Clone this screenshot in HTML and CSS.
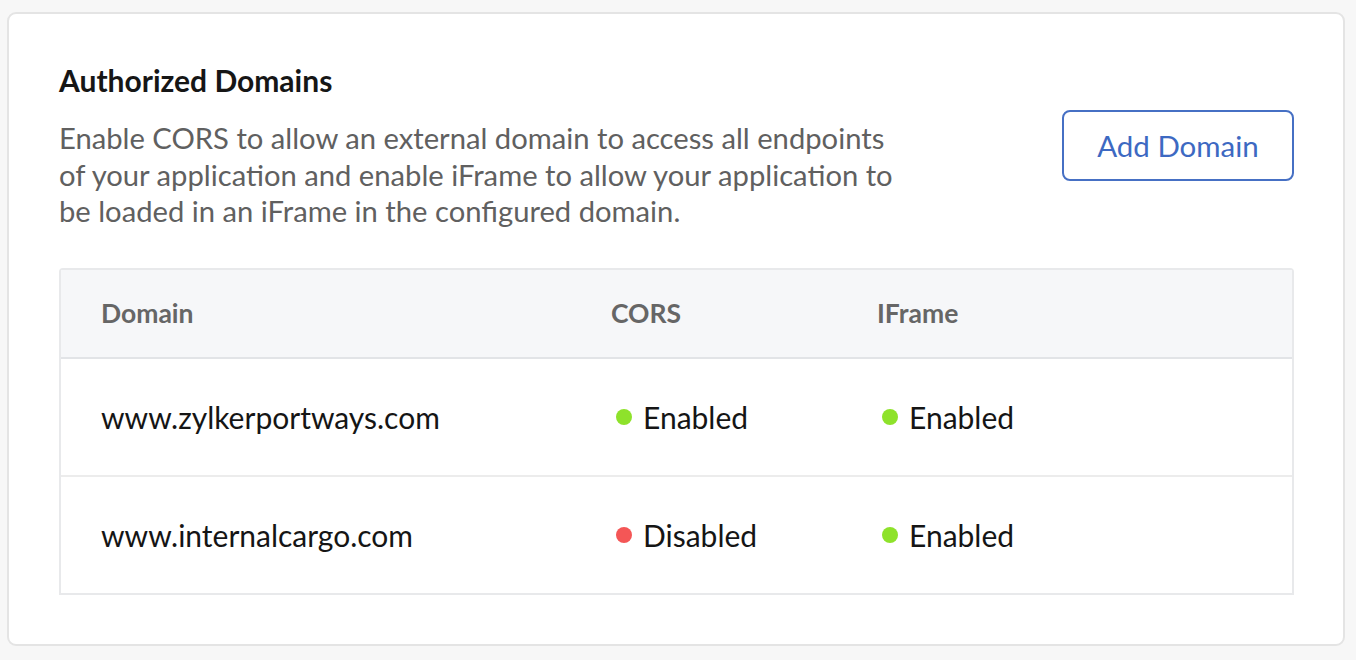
FILE: index.html
```html
<!DOCTYPE html>
<html lang="en">

<head>
    <meta charset="UTF-8">
    <title>Authorized Domains</title>
    <link rel="stylesheet" href="styles.css">
</head>

<body>

    <div class="card">
        <div class="card__head">
            <div class="card__intro">
                <h2 class="card__title">Authorized Domains</h2>
                <p class="card__desc">Enable CORS to allow an external domain to access all endpoints of your application and enable iFrame to allow your application to be loaded in an iFrame in the configured domain.</p>
            </div>
            <button class="btn">Add Domain</button>
        </div>

        <div class="domains">
            <div class="domains__row domains__row--head">
                <div class="domains__cell">Domain</div>
                <div class="domains__cell">CORS</div>
                <div class="domains__cell">IFrame</div>
            </div>
            <div class="domains__row">
                <div class="domains__cell">www.zylkerportways.com</div>
                <div class="domains__cell"><span class="status status--on"></span>Enabled</div>
                <div class="domains__cell"><span class="status status--on"></span>Enabled</div>
            </div>
            <div class="domains__row">
                <div class="domains__cell">www.internalcargo.com</div>
                <div class="domains__cell"><span class="status status--off"></span>Disabled</div>
                <div class="domains__cell"><span class="status status--on"></span>Enabled</div>
            </div>
        </div>
    </div>

</body>

</html>
```
FILE: styles.css
```css
* {
    padding: 0;
    margin: 0;
    box-sizing: border-box;
}

body {
    background-color: #f7f7f7;
    font-family: Lato, "Open Sans", sans-serif;
    padding: 12px 11px 14px 7px;
}

.card {
    background-color: #fff;
    border: 2px solid #e4e4e4;
    border-radius: 9px;
    padding: 48px 49px 50px 50px;
    height: 634px;
}

.card__head {
    display: flex;
    justify-content: space-between;
    align-items: flex-start;
}

.card__title {
    font-size: 30px;
    font-weight: 700;
    line-height: 36px;
    color: #161616;
}

.card__desc {
    margin-top: 22px;
    max-width: 856px;
    font-size: 29.2px;
    line-height: 36.5px;
    color: #606060;
}

.btn {
    margin-top: 48px;
    width: 232px;
    height: 71px;
    background: #fff;
    border: 2px solid #4670c4;
    border-radius: 8px;
    color: #3d69c2;
    font-family: inherit;
    font-size: 29.5px;
}

.domains {
    margin-top: 38px;
    border: 2px solid #e8e9eb;
    border-radius: 4px 4px 0 0;
}

.domains__row {
    display: grid;
    grid-template-columns: 510px 266px 1fr;
    height: 118px;
    align-items: center;
    border-bottom: 2px solid #ececec;
    font-size: 30px;
    color: #151515;
}

.domains__row:last-child {
    height: 116px;
    border-bottom: none;
}

.domains__row--head {
    height: 89px;
    border-bottom-color: #e2e4e7;
    background-color: #f6f7f9;
    font-size: 26.5px;
    font-weight: 700;
    color: #666;
}

.domains__cell {
    padding-left: 40px;
    display: flex;
    align-items: center;
}

.status {
    width: 16px;
    height: 16px;
    border-radius: 50%;
    margin: 0 11px 0 5px;
}

.status--on {
    background-color: #8ee22b;
}

.status--off {
    background-color: #f45656;
}
```
